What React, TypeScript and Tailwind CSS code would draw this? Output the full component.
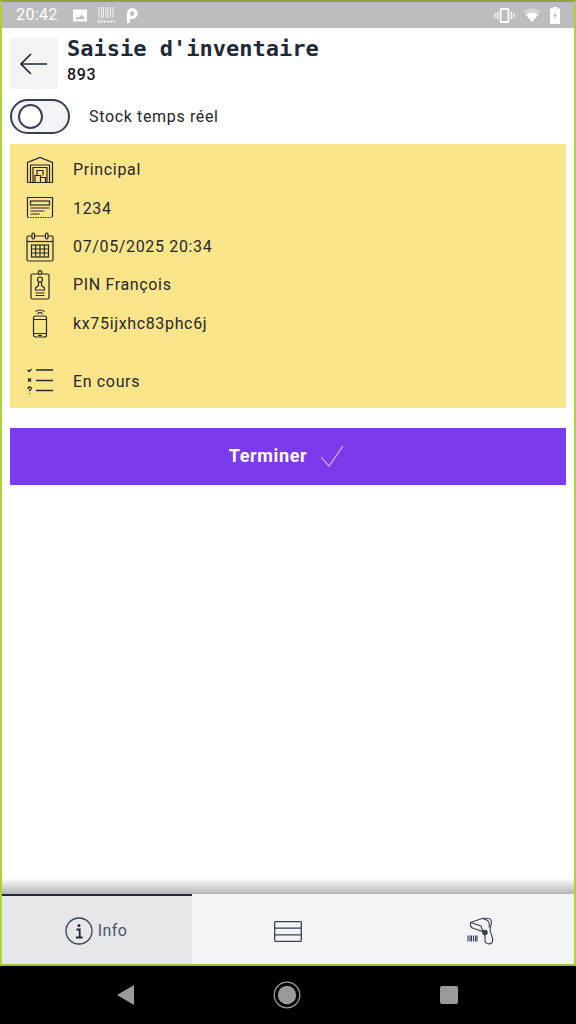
import { ReactNode } from 'react'

function Warehouse() {
  return (
    <svg width="28" height="28" viewBox="0 0 28 28" fill="none" stroke="#27272a" strokeWidth="1.200">
      <path d="M1.500 26.500V6.500L14 1.500l12.500 5v20z" />
      <path d="M4.500 26.500V9h19v17.500" />
      <path d="M7 26.500V11.500h14v15" />
      <path d="M11 19.500v-5h6v5M9 26.500v-7h5.500v7M14.500 21.500h5v5" />
    </svg>
  )
}

function Ticket() {
  return (
    <svg className="-mt-[1px]" width="28" height="24" viewBox="0 0 28 24" fill="none" stroke="#27272a" strokeWidth="1.200">
      <path d="M1.500 21V1.500h25V21" />
      <path d="M1.500 21.500h25" strokeDasharray="1.500 1" />
      <rect x="4.500" y="5" width="19" height="4" />
      <path d="M4.500 12h19M4.500 15h14M4.500 18h9" />
    </svg>
  )
}

function Calendar() {
  return (
    <svg width="28" height="30" viewBox="0 0 28 30" fill="none" stroke="#27272a" strokeWidth="1.200">
      <rect x="1" y="4" width="26" height="25" rx="1.500" />
      <path d="M1 9.500h26" />
      <rect x="6" y="1" width="2.500" height="6" rx="1.200" fill="#fbe58b" />
      <rect x="19.500" y="1" width="2.500" height="6" rx="1.200" fill="#fbe58b" />
      <rect x="5.500" y="13" width="17" height="12" />
      <path d="M5.500 17h17M5.500 21h17M9.700 13v12M14 13v12M18.300 13v12" />
    </svg>
  )
}

function Badge() {
  return (
    <svg width="20" height="30" viewBox="0 0 20 30" fill="none" stroke="#27272a" strokeWidth="1.200">
      <rect x="1" y="4" width="18" height="25" rx="1.500" />
      <circle cx="10" cy="2.500" r="1.800" fill="#fbe58b" />
      <circle cx="10" cy="9.500" r="2.500" />
      <path d="M8.500 12v3.500L5.500 18v2h9v-2l-3-2.500V12M5.500 23h9M5.500 25.500h9" />
    </svg>
  )
}

function Phone() {
  return (
    <svg className="-mt-[2px]" width="16" height="30" viewBox="0 0 16 30" fill="none" stroke="#27272a" strokeWidth="1.200">
      <rect x="1.500" y="8" width="13" height="21" rx="2" />
      <path d="M1.500 11.500h13M1.500 25.500h13M6 27.300h4" />
      <path d="M5.500 5.500q2.500-1.700 5 0M3.500 3.500q4.500-3 9 0" />
    </svg>
  )
}

function Checklist() {
  return (
    <svg className="-mt-[2px]" width="28" height="26" viewBox="0 0 28 26" fill="none" stroke="#27272a" strokeWidth="1.300">
      <path d="M10 2h17M10 12.500h17M10 22.500h17" />
      <path d="M1.500 2l1.500 1.500 2.500-2.500" />
      <path d="M2 10.500l3 3M5 10.500l-3 3" strokeWidth="1.500" />
      <path d="M2 21q0-2 1.700-2t1.500 1.700q-.2 1-1.500 1.500v1M3.700 25v.8" />
    </svg>
  )
}

function InfoRow({ icon, label, className }: { icon: ReactNode; label: string; className?: string }) {
  return (
    <div className={`flex h-[38.400px] items-center ${className ?? ''}`}>
      <div className="flex w-[63px] shrink-0 justify-center pr-[4px]">{icon}</div>
      <span className="tracking-[0.65px]">{label}</span>
    </div>
  )
}

export default function App() {
  return (
    <div className="flex h-[1024px] w-[576px] flex-col bg-black font-['Roboto',sans-serif] text-[#27272a]">
      <div className="flex h-[966px] flex-col border-x-2 border-b-2 border-t-2 border-x-[#a6d63a] border-b-[#9ac52e] border-t-[#8fa82c] bg-white">
        {/* android status bar */}
        <div className="flex h-[26px] shrink-0 items-center bg-[#bdbdbd] pl-[14px] pr-[14px] text-white">
          <span className="text-[16px] tracking-[0.4px]">20:42</span>
          <svg className="ml-[15px]" width="14" height="13" viewBox="0 0 15 13" fill="#fff">
            <path d="M0 0h15v13H0zM2 10.500h11L9.500 5.500 6.500 9 5 7.500z" fillRule="evenodd" />
          </svg>
          <svg className="ml-[11px]" width="17" height="16" viewBox="0 0 17 16" fill="none" stroke="#fff" strokeOpacity=".8">
            <path d="M1 0v11M3.500 0v11M5.500 0v11M8 0v11M10 0v11M12.500 0v11M15 0v11" />
            <path d="M0 14.500h17" strokeWidth="2" strokeDasharray="2 1" />
          </svg>
          <svg className="ml-[11px]" width="14" height="15" viewBox="0 0 14 15" fill="none" stroke="#fff" strokeWidth="3.200">
            <path d="M2.500 15V5.500a3.800 3.800 0 1 1 3.800 3.800H2.500" />
          </svg>
          <div className="ml-auto flex items-center">
            <svg width="21" height="15" viewBox="0 0 21 15" fill="none" stroke="#fff">
              <rect x="6.500" y="1" width="8" height="13" rx="1" strokeWidth="1.800" />
              <path d="M3.500 4v7M1 5.500v4M17.500 4v7M20 5.500v4" strokeWidth="1.300" />
            </svg>
            <svg className="ml-[8px]" width="18" height="14" viewBox="0 0 18 14">
              <path d="M0 3.500Q9-3 18 3.500L9 14z" fill="#fff" fillOpacity=".35" />
              <path d="M3 7q6-4.500 12 0L9 14z" fill="#fff" />
            </svg>
            <svg className="ml-[9px]" width="10" height="17" viewBox="0 0 10 17">
              <path d="M3 0h4v1.500h3V17H0V1.500h3z" fill="#fff" />
              <path d="M5.700 4L3 9.500h2l-.7 3.500L7 7.500H5z" fill="#bdbdbd" />
            </svg>
          </div>
        </div>

        <div className="flex grow flex-col px-[8px] pt-[10px]">
          <div className="flex h-[51px] items-start">
            <button className="flex h-[51px] w-[48px] items-center justify-center bg-[#f3f4f6]">
              <svg width="28" height="24" viewBox="0 0 28 24" fill="none" stroke="#1f2937" strokeWidth="1.700">
                <path d="M1 12h26M11 2L1 12l10 10" />
              </svg>
            </button>
            <div className="ml-[9px] flex flex-col">
              <span className="-mt-[1px] text-[22px] font-bold leading-[24px] text-[#1f2937] font-['DejaVu_Sans_Mono',monospace]">
                Saisie d'inventaire
              </span>
              <span className="mt-[2px] text-[16px] font-medium leading-[24px] tracking-[0.6px] text-[#18181b]">893</span>
            </div>
          </div>

          <div className="mt-[10px] flex h-[35px] items-center">
            <div className="flex h-[35px] w-[60px] items-center rounded-full border-2 border-[#374151] bg-[#f3f4f6] pl-[6px]">
              <span className="h-[25px] w-[25px] rounded-full border-2 border-[#374151] bg-white" />
            </div>
            <span className="ml-[19px] text-[16px] tracking-[0.65px]">Stock temps réel</span>
          </div>

          <div className="mt-[10px] h-[264px] bg-[#fbe58b] pt-[7px] text-[16px]">
            <InfoRow icon={<Warehouse />} label="Principal" />
            <InfoRow icon={<Ticket />} label="1234" />
            <InfoRow icon={<Calendar />} label="07/05/2025 20:34" />
            <InfoRow icon={<Badge />} label="PIN François" />
            <InfoRow icon={<Phone />} label="kx75ijxhc83phc6j" />
            <InfoRow icon={<Checklist />} label="En cours" className="mt-[19.500px]" />
          </div>

          <button className="mt-[20px] flex h-[57px] items-center justify-center bg-[#7c3aed] pb-[2px] pr-[3px] text-[18px] font-bold tracking-[0.65px] text-white">
            <span>Terminer</span>
            <svg className="ml-[13px]" width="24" height="22" viewBox="0 0 24 22" fill="none" stroke="#d8c4fb" strokeWidth="1.100">
              <path d="M1 12l8 9L23 1" />
            </svg>
          </button>
        </div>

        {/* bottom tabs */}
        <div className="relative flex h-[70px] shrink-0 bg-[#f3f4f6] pt-[4px] text-[16px] text-[#4b5563]">
          <div className="pointer-events-none absolute -top-[16px] left-0 right-0 h-[16px] bg-gradient-to-b from-transparent to-[#b5b5b5]" />
          <div className="-mt-[4px] flex w-[190px] items-center justify-center gap-[5px] border-t-2 border-[#1f2a3d] bg-[#e5e7eb] pt-[2px] pr-[2px]">
            <svg width="28" height="28" viewBox="0 0 28 28" fill="none" stroke="#374151" strokeWidth="1.300">
              <circle cx="14" cy="14" r="13" />
              <circle cx="14" cy="8.500" r="1.500" fill="#1f2937" stroke="none" />
              <path d="M11.500 12.500h3.200V20M11 20.500h6.500" stroke="#1f2937" strokeWidth="1.800" />
            </svg>
            <span className="tracking-[0.4px]">Info</span>
          </div>
          <div className="flex w-[192px] items-center justify-center">
            <svg width="28" height="21" viewBox="0 0 28 21" fill="none" stroke="#374151" strokeWidth="1.300">
              <rect x=".7" y=".7" width="26.600" height="19.600" rx=".7" />
              <path d="M.7 7.200h26.600M.7 13.800h26.600" />
            </svg>
          </div>
          <div className="flex w-[190px] items-center justify-center pl-[4px]">
            <svg width="28" height="28" viewBox="0 0 28 28" fill="none" stroke="#374151" strokeWidth="1.100">
              <path d="M3.500 5.500L15 1.500q8-1 9 1.500.8 3-.5 7-1 3.500 1 8 2 5 .5 7.500-2 2-5 1-2.500-1-2-3.500.5-2.500-.5-5 -.5-1.500-1-3L5.500 11q-2.500-1-2-5.500z" />
              <path d="M3.500 5.500L14 9l2 6M15 1.500q5 1 6.500 3 1.500 2 .5 6" />
              <circle cx="18" cy="15.500" r="2.200" fill="#374151" />
              <path d="M1 18.500v6M3 18.500v6M4.500 18.500v6M6.500 18.500v6M8.500 18.500v6M10 18.500v6" strokeWidth="1.100" />
            </svg>
          </div>
        </div>
      </div>

      {/* android nav bar */}
      <div className="flex grow items-center">
        <div className="flex w-[576px] items-center justify-between pl-[117px] pr-[118px]">
          <svg width="17" height="20" viewBox="0 0 17 20" fill="#9a9a9a">
            <path d="M17 0v20L0 10z" />
          </svg>
          <svg width="28" height="28" viewBox="0 0 28 28">
            <circle cx="14" cy="14" r="12.800" fill="none" stroke="#9a9a9a" strokeWidth="1.300" />
            <circle cx="14" cy="14" r="9.200" fill="#9a9a9a" />
          </svg>
          <span className="h-[18px] w-[18px] rounded-[2px] bg-[#9a9a9a]" />
        </div>
      </div>
    </div>
  )
}
